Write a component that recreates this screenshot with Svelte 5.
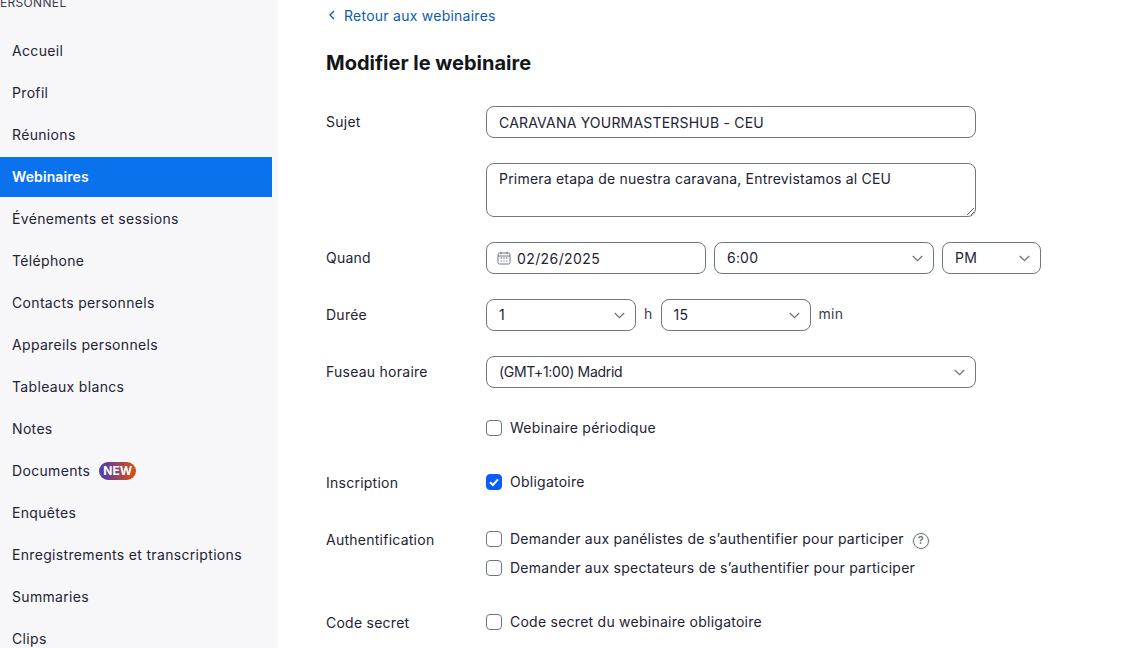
<script>
	const navItems = [
		'Accueil',
		'Profil',
		'Réunions',
		'Webinaires',
		'Événements et sessions',
		'Téléphone',
		'Contacts personnels',
		'Appareils personnels',
		'Tableaux blancs',
		'Notes',
		'Documents',
		'Enquêtes',
		'Enregistrements et transcriptions',
		'Summaries',
		'Clips'
	];
	const active = 'Webinaires';

	let subject = $state('CARAVANA YOURMASTERSHUB - CEU');
	let description = $state('Primera etapa de nuestra caravana, Entrevistamos al CEU');
	let date = $state('02/26/2025');
	let required = $state(true);
</script>

{#snippet select(value, cls)}
	<div class="select {cls}">
		<span class="select-value">{value}</span>
		<svg width="11" height="7" viewBox="0 0 11 7" fill="none">
			<path d="M.8 1 5.5 5.7 10.2 1" stroke="#6e7680" stroke-width="1.3" />
		</svg>
	</div>
{/snippet}

{#snippet check(label, checked = false)}
	<label class="check">
		<input type="checkbox" checked={checked} />
		<span class="box" class:checked>
			{#if checked}
				<svg width="12" height="12" viewBox="0 0 12 12" fill="none">
					<path d="M2 6.2 4.9 9 10 3.4" stroke="#fff" stroke-width="2" />
				</svg>
			{/if}
		</span>
		<span class="check-text">{label}</span>
	</label>
{/snippet}

<div class="page">
	<aside class="sidebar">
		<div class="section">PERSONNEL</div>
		<nav>
			{#each navItems as item}
				<a href="#top" class="nav-item" class:active={item === active}>
					{item}
					{#if item === 'Documents'}
						<span class="new">NEW</span>
					{/if}
				</a>
			{/each}
		</nav>
	</aside>

	<main>
		<a href="#top" class="back">
			<svg width="8" height="10" viewBox="0 0 8 10" fill="none">
				<path d="M6 1 2 5 6 9" stroke="#0e5cad" stroke-width="1.3" />
			</svg>
			Retour aux webinaires
		</a>
		<h1>Modifier le webinaire</h1>

		<div class="row subject">
			<div class="label">Sujet</div>
			<input class="field wide" type="text" bind:value={subject} />
		</div>

		<div class="row desc">
			<div class="label"></div>
			<textarea class="field wide" bind:value={description}></textarea>
		</div>

		<div class="row when">
			<div class="label">Quand</div>
			<div class="field date">
				<svg width="14" height="14" viewBox="0 0 14 14" fill="none" stroke="#6e7680">
					<rect x="1" y="2" width="12" height="11" rx="1.5" />
					<path d="M1 5h12M4 .8v2.4M10 .8v2.4" />
					<path d="M3.5 7.2h1.4M6.3 7.2h1.4M9.1 7.2h1.4M3.5 10h1.4M6.3 10h1.4M9.1 10h1.4" stroke-width="1.2" />
				</svg>
				<input type="text" bind:value={date} />
			</div>
			{@render select('6:00', 'w220')}
			{@render select('PM', 'w99')}
		</div>

		<div class="row duration">
			<div class="label">Durée</div>
			{@render select('1', 'w150')}
			<span class="unit">h</span>
			{@render select('15', 'w150')}
			<span class="unit">min</span>
		</div>

		<div class="row zone">
			<div class="label">Fuseau horaire</div>
			{@render select('(GMT+1:00) Madrid', 'wide tight')}
		</div>

		<div class="row periodic">
			<div class="label"></div>
			{@render check('Webinaire périodique')}
		</div>

		<div class="row registration">
			<div class="label">Inscription</div>
			<label class="check">
				<input type="checkbox" bind:checked={required} />
				<span class="box" class:checked={required}>
					<svg width="12" height="12" viewBox="0 0 12 12" fill="none">
						<path d="M2 6.2 4.9 9 10 3.4" stroke="#fff" stroke-width="2" />
					</svg>
				</span>
				<span class="check-text">Obligatoire</span>
			</label>
		</div>

		<div class="row auth">
			<div class="label">Authentification</div>
			<div class="stack">
				<div class="with-help">
					{@render check("Demander aux panélistes de s’authentifier pour participer")}
					<span class="help">?</span>
				</div>
				{@render check("Demander aux spectateurs de s’authentifier pour participer")}
			</div>
		</div>

		<div class="row secret">
			<div class="label">Code secret</div>
			{@render check('Code secret du webinaire obligatoire')}
		</div>
	</main>
</div>

<style>
	:global(body) {
		margin: 0;
		background: #fff;
		overflow: hidden;
	}

	.page {
		display: flex;
		height: 648px;
		overflow: hidden;
		font-family: Inter, 'Liberation Sans', sans-serif;
		font-size: 14px;
		letter-spacing: 0.25px;
		color: #232333;
	}

	.sidebar {
		width: 272px;
		padding-right: 6px;
		flex: none;
		background: #f7f7fa;
		overflow: hidden;
		letter-spacing: 0.33px;
	}

	.section {
		margin: -5px 0 0 -8px;
		height: 36px;
		font-size: 12px;
		line-height: 16px;
		color: #3b3b4a;
	}

	nav {
		display: flex;
		flex-direction: column;
		gap: 2px;
	}

	.nav-item {
		box-sizing: border-box;
		display: flex;
		flex: none;
		align-items: center;
		height: 40px;
		padding: 0 0 2px 12px;
		color: #232333;
		text-decoration: none;
	}

	.nav-item.active {
		background: #0b72ed;
		color: #fff;
		font-weight: 600;
		letter-spacing: 0.1px;
	}

	.new {
		margin: 2px 0 0 9px;
		padding: 0 4px;
		height: 18px;
		border-radius: 9px;
		background: linear-gradient(90deg, #5b3da6 15%, #c94f1c 85%);
		color: #fff;
		font-size: 12px;
		font-weight: 700;
		letter-spacing: 0;
		line-height: 18px;
	}

	main {
		flex: 1;
		padding-left: 48px;
	}

	.back {
		display: flex;
		align-items: center;
		gap: 8px;
		height: 20px;
		margin: 5px 0 0 2px;
		color: #0e5cad;
		text-decoration: none;
	}

	h1 {
		margin: 24px 0 0;
		height: 28px;
		font-size: 20px;
		line-height: 28px;
		font-weight: 700;
		letter-spacing: 0;
		color: #131619;
	}

	.row {
		display: flex;
		align-items: center;
		gap: 8px;
	}

	.label {
		box-sizing: border-box;
		width: 160px;
		margin-right: -8px;
		padding-bottom: 2px;
		flex: none;
		color: #232333;
	}

	.subject {
		margin-top: 29px;
	}
	.desc {
		margin-top: 25px;
	}
	.when {
		margin-top: 25px;
	}
	.duration,
	.zone {
		margin-top: 25px;
	}
	.periodic {
		margin-top: 32px;
	}
	.registration {
		margin-top: 38px;
	}
	.auth {
		margin-top: 41px;
		align-items: flex-start;
	}
	.secret {
		margin-top: 38px;
	}

	.registration .label,
	.secret .label {
		height: 16px;
	}

	.field,
	.select {
		box-sizing: border-box;
		height: 32px;
		border: 1px solid #6e7680;
		border-radius: 8px;
		background: #fff;
		font: inherit;
		letter-spacing: 0.2px;
		color: #232333;
	}

	input.field {
		padding: 0 12px;
		outline: none;
	}

	textarea.field {
		display: block;
		height: 54px;
		padding: 6px 12px;
		outline: none;
		resize: vertical;
	}

	.wide {
		width: 490px;
	}

	.date {
		display: flex;
		align-items: center;
		gap: 6px;
		width: 220px;
		padding-left: 10px;
	}

	.date input {
		flex: 1;
		min-width: 0;
		padding: 0;
		border: 0;
		outline: none;
		font: inherit;
		letter-spacing: 0.4px;
		color: inherit;
		background: none;
	}

	.select {
		display: flex;
		align-items: center;
		justify-content: space-between;
		padding: 0 10px 0 12px;
	}

	.select-value {
		padding-bottom: 1px;
	}

	.tight {
		letter-spacing: -0.3px;
	}

	.w220 {
		width: 220px;
	}
	.w150 {
		width: 150px;
	}
	.w99 {
		width: 99px;
	}

	.unit {
		color: #3b3b4a;
		margin-top: -4px;
	}

	.check {
		display: flex;
		align-items: center;
		gap: 8px;
		height: 16px;
		color: #232333;
	}

	.check input {
		display: none;
	}

	.check-text {
		padding-bottom: 2px;
	}

	.box {
		box-sizing: border-box;
		display: flex;
		align-items: center;
		justify-content: center;
		width: 16px;
		height: 16px;
		border: 1px solid #6e7680;
		border-radius: 4px;
		background: #fff;
	}

	.box.checked {
		border-color: #0b5cff;
		background: #0b5cff;
	}

	.stack {
		display: flex;
		flex-direction: column;
		gap: 13px;
	}

	.with-help {
		display: flex;
		align-items: center;
		height: 16px;
	}

	.help {
		box-sizing: border-box;
		flex: none;
		width: 16px;
		height: 16px;
		margin-left: 9px;
		transform: translateY(2px);
		border: 1.5px solid #6e7680;
		border-radius: 50%;
		box-shadow: 0 0 0 1px #e8e8ec;
		color: #6e7680;
		font-size: 11px;
		font-weight: 600;
		letter-spacing: 0;
		line-height: 13px;
		text-align: center;
	}
</style>
